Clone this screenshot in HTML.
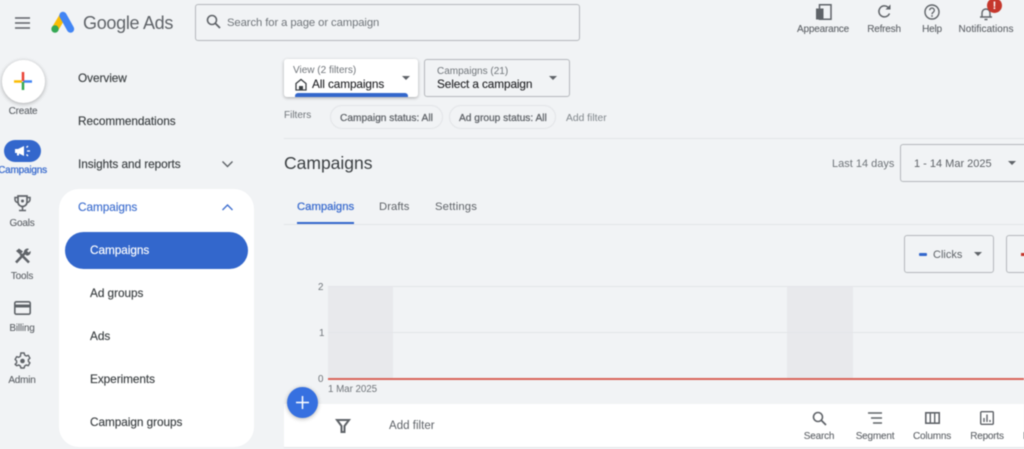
<!DOCTYPE html>
<html><head><meta charset="utf-8"><style>
html,body{margin:0;padding:0}
body{width:1024px;height:449px;overflow:hidden;background:#f1f3f5;position:relative;font-family:"Liberation Sans",sans-serif;color:#3c4043}
#r{position:absolute;left:0;top:0;width:1024px;height:449px;filter:blur(.4px)}
.t{position:absolute;white-space:nowrap;line-height:14px}
.b{position:absolute;box-sizing:border-box}
.c{transform:translateX(-50%)}
.n{font-size:11.800px;color:#3c4043;letter-spacing:-.05px;-webkit-text-stroke:.15px currentColor}
.s{font-size:10px;color:#5f6368;letter-spacing:-.2px;-webkit-text-stroke:.1px currentColor}
svg{position:absolute;overflow:visible}
.tri{position:absolute;width:0;height:0;border-left:4.500px solid transparent;border-right:4.500px solid transparent;border-top:4.500px solid #5f6368}
</style></head><body><div id="r">

<!-- header -->
<svg style="left:15px;top:17px" width="15" height="12"><path d="M0 1h15M0 6h15M0 11h15" stroke="#5f6368" stroke-width="1.600"/></svg>
<svg style="left:50px;top:11px" width="25" height="23" viewBox="0 0 25 23"><path d="M14 3L5 18" stroke="#fbbc04" stroke-width="7"/><path d="M13 4.500L20.500 18" stroke="#4285f4" stroke-width="7.400" stroke-linecap="round"/><circle cx="5" cy="18" r="3.700" fill="#34a853"/></svg>
<div class="t" style="left:83px;top:12px;font-size:18px;line-height:22px;color:#5f6368;letter-spacing:-.3px">Google Ads</div>
<div class="b" style="left:195px;top:4px;width:385px;height:37px;border:1px solid #b5b8bc;border-radius:3px"></div>
<svg style="left:206px;top:14px" width="15" height="16"><circle cx="6" cy="6" r="4.500" fill="none" stroke="#5f6368" stroke-width="1.600"/><path d="M9.500 9.500L14 14" stroke="#5f6368" stroke-width="1.800"/></svg>
<div class="t" style="left:227px;top:16px;font-size:11.300px;color:#70757a;letter-spacing:-.1px">Search for a page or campaign</div>

<svg style="left:815px;top:4px" width="17" height="16"><path d="M4.500 .8h11.500v14.400H4.500z" fill="none" stroke="#5f6368" stroke-width="1.500"/><path d="M1 4.500h7.500V15.500H1z" fill="#5f6368"/></svg>
<div class="t s c" style="left:823px;top:23px">Appearance</div>
<svg style="left:877px;top:4px" width="15" height="15" viewBox="0 0 15 15"><path d="M12.500 9.500A5.500 5.500 0 1 1 11 3.200" fill="none" stroke="#5f6368" stroke-width="1.500"/><path d="M8.500 5.500h5v-5z" fill="#5f6368"/></svg>
<div class="t s c" style="left:884px;top:23px">Refresh</div>
<svg style="left:924px;top:4px" width="16" height="16"><circle cx="8" cy="8" r="7" fill="none" stroke="#5f6368" stroke-width="1.400"/><path d="M5.700 6.300a2.300 2.300 0 1 1 3.600 1.900c-.8.6-1.300 1-1.300 2" fill="none" stroke="#5f6368" stroke-width="1.300"/><circle cx="8" cy="12" r=".9" fill="#5f6368"/></svg>
<div class="t s c" style="left:932px;top:23px">Help</div>
<svg style="left:979px;top:6px" width="14" height="14"><path d="M1 11h12M3 11V7a4 4 0 0 1 8 0v4" fill="none" stroke="#5f6368" stroke-width="1.400"/><path d="M5.500 13.500h3" stroke="#5f6368" stroke-width="1.500"/></svg>
<div class="b" style="left:987px;top:-2px;width:15px;height:15px;border-radius:50%;background:#c5372c"></div>
<div class="t c" style="left:994.500px;top:0;font-size:11px;font-weight:bold;color:#fff;line-height:12px">!</div>
<div class="t s c" style="left:986px;top:23px;letter-spacing:.05px">Notifications</div>

<!-- rail -->
<div class="b" style="left:2px;top:60px;width:43px;height:43px;border-radius:50%;background:#fff;box-shadow:0 1px 4px rgba(0,0,0,.3)"></div>
<svg style="left:13px;top:71px" width="20" height="20"><path d="M1 10.500h8" stroke="#fbbc04" stroke-width="2.500"/><path d="M10 10.500h9" stroke="#4285f4" stroke-width="2.500"/><path d="M10 1v9" stroke="#ea4335" stroke-width="2.500"/><path d="M10 11v8" stroke="#34a853" stroke-width="2.500"/></svg>
<div class="t s c" style="left:23px;top:105px">Create</div>
<div class="b" style="left:4px;top:140px;width:37px;height:22px;border-radius:11px;background:#3367cc"></div>
<svg style="left:14px;top:145px" width="17" height="13" viewBox="0 0 17 13"><path d="M1 4h3l6-3v10L4 8H1z" fill="#fff"/><path d="M4 8v2.500" stroke="#fff" stroke-width="2"/><path d="M12.500 2.500l1.500-1.500M13 6h3M12.500 9.500L14 11" stroke="#fff" stroke-width="1.300"/></svg>
<div class="t c" style="left:22.500px;top:164px;font-size:10px;color:#3f6fcf;letter-spacing:-.2px;-webkit-text-stroke:.3px currentColor">Campaigns</div>
<svg style="left:14px;top:195px" width="17" height="17" viewBox="0 0 17 17"><path d="M4 1h9v6a4.500 4.500 0 0 1-9 0z" fill="none" stroke="#5f6368" stroke-width="1.700"/><path d="M4 2.500H1v2a3 3 0 0 0 3 3M13 2.500h3v2a3 3 0 0 1-3 3M8.500 11.500V15M5 15.500h7" fill="none" stroke="#5f6368" stroke-width="1.500"/><circle cx="8.500" cy="6" r="1.500" fill="#5f6368"/></svg>
<div class="t s c" style="left:22px;top:217px">Goals</div>
<svg style="left:14px;top:248px" width="17" height="16" viewBox="0 0 17 16"><path d="M2 14.500L11 5" stroke="#5f6368" stroke-width="2.600"/><path d="M15 14.500L6.500 6" stroke="#5f6368" stroke-width="2.600"/><path d="M2 3l3-2.500 4 3-3 3z" fill="#5f6368"/><path d="M10 5a3.500 3.500 0 0 1 5-4l-2 2 1.500 1.500 2-1.500a3.500 3.500 0 0 1-4 4.500z" fill="#5f6368"/></svg>
<div class="t s c" style="left:22px;top:270px">Tools</div>
<svg style="left:14px;top:301px" width="17" height="14"><rect x=".8" y=".8" width="15.400" height="12.400" rx="1.500" fill="none" stroke="#5f6368" stroke-width="1.600"/><path d="M1 5h15" stroke="#5f6368" stroke-width="3"/></svg>
<div class="t s c" style="left:22px;top:322px">Billing</div>
<svg style="left:14px;top:352px" width="17" height="17" viewBox="0 0 17 17"><path d="M6.800 1h3.400l.4 2 1.700 1 2-.7 1.600 2.900-1.500 1.300v2l1.500 1.300-1.600 2.900-2-.7-1.700 1-.4 2H6.800l-.4-2-1.700-1-2 .7L1.100 12.300l1.500-1.300V8.900L1.100 7.500l1.600-2.900 2 .7 1.700-1z" fill="none" stroke="#5f6368" stroke-width="1.400" stroke-linejoin="round"/><circle cx="8.500" cy="9" r="2.300" fill="#5f6368"/></svg>
<div class="t s c" style="left:22px;top:374px">Admin</div>

<!-- nav -->
<div class="t n" style="left:78px;top:71px">Overview</div>
<div class="t n" style="left:78px;top:114px">Recommendations</div>
<div class="t n" style="left:78px;top:157px">Insights and reports</div>
<svg style="left:222px;top:161px" width="11" height="7"><path d="M.5.500l5 5 5-5" fill="none" stroke="#5f6368" stroke-width="1.400"/></svg>
<div class="b" style="left:59px;top:189px;width:195px;height:258px;background:#fff;border-radius:20px"></div>
<div class="t n" style="left:78px;top:200px;color:#3f6fcf">Campaigns</div>
<svg style="left:222px;top:204px" width="11" height="7"><path d="M.5 6l5-5 5 5" fill="none" stroke="#3f6fcf" stroke-width="1.400"/></svg>
<div class="b" style="left:65px;top:232px;width:183px;height:37px;background:#3367cc;border-radius:19px"></div>
<div class="t n" style="left:90px;top:243px;color:#fff">Campaigns</div>
<div class="t n" style="left:90px;top:286px">Ad groups</div>
<div class="t n" style="left:90px;top:329px">Ads</div>
<div class="t n" style="left:90px;top:372px">Experiments</div>
<div class="t n" style="left:90px;top:415px">Campaign groups</div>

<!-- filter bar -->
<div class="b" style="left:284px;top:59px;width:134px;height:38px;background:#fff;border-radius:3px;box-shadow:0 1px 3px rgba(0,0,0,.3);overflow:hidden"><div class="b" style="left:11px;top:34px;width:113px;height:6px;background:#3367cc;border-radius:3px"></div></div>
<div class="t" style="left:293px;top:64px;font-size:10px;color:#70757a">View (2 filters)</div>
<svg style="left:295px;top:78px" width="12" height="13"><path d="M1 5.500L6 1.500l5 4V12H1z" fill="none" stroke="#3c4043" stroke-width="1.300"/><path d="M4 12V8h4v4" fill="#3c4043"/></svg>
<div class="t" style="left:312px;top:77px;font-size:11.800px;color:#202124;letter-spacing:-.1px;-webkit-text-stroke:.1px currentColor">All campaigns</div>
<div class="tri" style="left:402px;top:76px"></div>
<div class="b" style="left:424px;top:59px;width:146px;height:38px;border:1px solid #b5b8bc;border-radius:3px"></div>
<div class="t" style="left:437px;top:65px;font-size:10px;color:#70757a">Campaigns (21)</div>
<div class="t" style="left:437px;top:77px;font-size:11.800px;color:#202124;letter-spacing:-.1px;-webkit-text-stroke:.1px currentColor">Select a campaign</div>
<div class="tri" style="left:549px;top:76px"></div>
<div class="t" style="left:284px;top:109px;font-size:10px;color:#70757a">Filters</div>
<div class="b" style="left:330px;top:105px;width:113px;height:24px;border:1px solid #e2e4e7;border-radius:12px"></div>
<div class="t" style="left:340px;top:112px;font-size:10.200px;color:#5f6368;-webkit-text-stroke:.25px currentColor">Campaign status: All</div>
<div class="b" style="left:449px;top:105px;width:107px;height:24px;border:1px solid #e2e4e7;border-radius:12px"></div>
<div class="t" style="left:459px;top:112px;font-size:10.200px;color:#5f6368;-webkit-text-stroke:.25px currentColor">Ad group status: All</div>
<div class="t" style="left:566px;top:112px;font-size:10.300px;color:#80868b">Add filter</div>
<div class="b" style="left:284px;top:138px;width:740px;height:1px;background:#e3e5e8"></div>

<!-- title -->
<div class="t" style="left:284px;top:152px;font-size:17.500px;line-height:22px;color:#3c4043">Campaigns</div>
<div class="t" style="left:832px;top:157px;font-size:11px;color:#70757a">Last 14 days</div>
<div class="b" style="left:900px;top:144px;width:140px;height:38px;border:1px solid #b5b8bc;border-radius:3px"></div>
<div class="t" style="left:914px;top:157px;font-size:11px;color:#5f6368">1 - 14 Mar 2025</div>
<div class="tri" style="left:1008px;top:161px"></div>

<!-- tabs -->
<div class="t" style="left:297px;top:200px;font-size:11.300px;color:#3f6fcf;-webkit-text-stroke:.3px currentColor">Campaigns</div>
<div class="b" style="left:297px;top:222px;width:57px;height:2px;background:#3367cc"></div>
<div class="t" style="left:379px;top:200px;font-size:11.300px;color:#5f6368;letter-spacing:.05px">Drafts</div>
<div class="t" style="left:435px;top:200px;font-size:11.300px;color:#5f6368;letter-spacing:.15px">Settings</div>
<div class="b" style="left:284px;top:224px;width:740px;height:1px;background:#e3e5e8"></div>

<!-- metric buttons -->
<div class="b" style="left:904px;top:235px;width:90px;height:38px;border:1px solid #b5b8bc;border-radius:3px"></div>
<div class="b" style="left:919px;top:253px;width:8px;height:3px;background:#3367cc;border-radius:1px"></div>
<div class="t" style="left:933px;top:248px;font-size:11px;color:#5f6368">Clicks</div>
<div class="tri" style="left:974px;top:252px"></div>
<div class="b" style="left:1006px;top:235px;width:40px;height:38px;border:1px solid #b5b8bc;border-radius:3px"></div>
<div class="b" style="left:1021px;top:253px;width:8px;height:3px;background:#c5372c"></div>

<!-- chart -->
<div class="b" style="left:328px;top:287px;width:65px;height:92px;background:#e8e9ec"></div>
<div class="b" style="left:787px;top:287px;width:66px;height:92px;background:#e8e9ec"></div>
<div class="b" style="left:328px;top:286px;width:696px;height:1px;background:#e3e5e8"></div>
<div class="b" style="left:328px;top:332px;width:696px;height:1px;background:#e3e5e8"></div>
<div class="b" style="left:328px;top:378px;width:696px;height:2px;background:#d9645a"></div>
<div class="t" style="left:318px;top:281px;font-size:9.800px;color:#70757a">2</div>
<div class="t" style="left:319px;top:327px;font-size:9.800px;color:#70757a">1</div>
<div class="t" style="left:318px;top:373px;font-size:9.800px;color:#70757a">0</div>
<div class="t" style="left:328px;top:383px;font-size:9.800px;color:#70757a;letter-spacing:-.05px">1 Mar 2025</div>

<!-- table bar -->
<div class="b" style="left:284px;top:404px;width:740px;height:43px;background:#fff"></div>
<div class="b" style="left:287px;top:387px;width:31px;height:31px;border-radius:50%;background:#3670e0;box-shadow:0 1px 4px rgba(0,0,0,.3)"></div>
<svg style="left:296px;top:396px" width="13" height="13"><path d="M6.500 0v13M0 6.500h13" stroke="#fff" stroke-width="1.500"/></svg>
<svg style="left:336px;top:419px" width="14" height="14"><path d="M1 1h12L8.500 7v6h-3V7z" fill="none" stroke="#5f6368" stroke-width="2"/></svg>
<div class="t" style="left:389px;top:419px;font-size:11.500px;color:#5f6368;letter-spacing:.02px">Add filter</div>
<svg style="left:812px;top:411px" width="15" height="15"><circle cx="6" cy="6" r="4.500" fill="none" stroke="#5f6368" stroke-width="1.600"/><path d="M9.500 9.500L14 14" stroke="#5f6368" stroke-width="1.800"/></svg>
<div class="t s c" style="left:819px;top:430px">Search</div>
<svg style="left:868px;top:412px" width="15" height="12"><path d="M0 1h14M3 6h11M5 11h9" stroke="#5f6368" stroke-width="1.500"/></svg>
<div class="t s c" style="left:875px;top:430px">Segment</div>
<svg style="left:925px;top:412px" width="15" height="12"><rect x=".8" y=".8" width="13.400" height="10.400" fill="none" stroke="#5f6368" stroke-width="1.600"/><path d="M5.300 1v10M9.700 1v10" stroke="#5f6368" stroke-width="1.400"/></svg>
<div class="t s c" style="left:932px;top:430px">Columns</div>
<svg style="left:980px;top:411px" width="14" height="14"><rect x=".7" y=".7" width="12.600" height="12.600" rx="1" fill="none" stroke="#5f6368" stroke-width="1.400"/><path d="M4 7v4M7 3.500V11M10 9v2" stroke="#5f6368" stroke-width="1.400"/></svg>
<div class="t s c" style="left:987px;top:430px">Reports</div>
<div class="t s" style="left:1023px;top:430px">D</div>
<div class="b" style="left:284px;top:447px;width:740px;height:1px;background:#e3e5e8"></div>
</div></body></html>
